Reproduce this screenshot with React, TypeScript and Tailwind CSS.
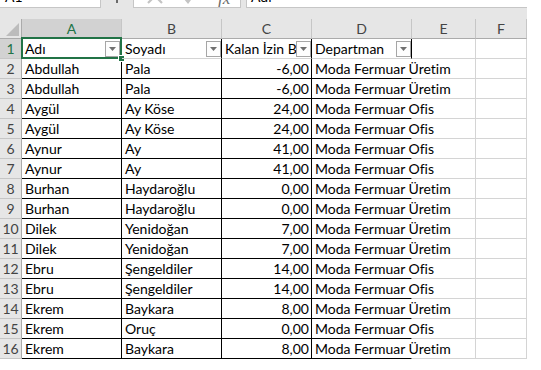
import React from 'react';

const GREEN = '#217346';

const data: [string, string, string, string][] = [
    ['Abdullah', 'Pala', '-6,00', 'Moda Fermuar Üretim'],
    ['Abdullah', 'Pala', '-6,00', 'Moda Fermuar Üretim'],
    ['Aygül', 'Ay Köse', '24,00', 'Moda Fermuar Ofis'],
    ['Aygül', 'Ay Köse', '24,00', 'Moda Fermuar Ofis'],
    ['Aynur', 'Ay', '41,00', 'Moda Fermuar Ofis'],
    ['Aynur', 'Ay', '41,00', 'Moda Fermuar Ofis'],
    ['Burhan', 'Haydaroğlu', '0,00', 'Moda Fermuar Üretim'],
    ['Burhan', 'Haydaroğlu', '0,00', 'Moda Fermuar Üretim'],
    ['Dilek', 'Yenidoğan', '7,00', 'Moda Fermuar Üretim'],
    ['Dilek', 'Yenidoğan', '7,00', 'Moda Fermuar Üretim'],
    ['Ebru', 'Şengeldiler', '14,00', 'Moda Fermuar Ofis'],
    ['Ebru', 'Şengeldiler', '14,00', 'Moda Fermuar Ofis'],
    ['Ekrem', 'Baykara', '8,00', 'Moda Fermuar Üretim'],
    ['Ekrem', 'Oruç', '0,00', 'Moda Fermuar Ofis'],
    ['Ekrem', 'Baykara', '8,00', 'Moda Fermuar Üretim'],
];

function FilterButton({ className = '' }: { className?: string }) {
    return (
        <div className={`mb-[1px] flex h-[16px] w-[15px] shrink-0 items-center justify-center border border-[#a6a6a6] bg-[#fdfdfd] ${className}`}>
            <svg width="7" height="4" viewBox="0 0 7 4">
                <path d="M0 0h7L3.5 4z" fill="#707070" />
            </svg>
        </div>
    );
}

function FormulaStrip() {
    return (
        <div className="flex h-[8px] w-[527px] overflow-hidden bg-[#e6e6e6] text-[14px] text-black">
            {/* name box */}
            <div className="h-full w-[101px] overflow-hidden border-r border-b border-[#c6c6c6] bg-white">
                <div className="-mt-[15px] flex h-[22px] items-center pl-[5px]">A1</div>
            </div>
            <div className="flex w-[32px] justify-center">
                <div className="h-[3px] w-[2px] bg-[#6a6a6a]" />
            </div>
            {/* cancel / enter / fx */}
            <div className="flex h-full w-[108px] overflow-hidden border-x border-b border-[#c6c6c6] bg-white">
                <svg className="-mt-[13px] ml-[12px]" width="18" height="18" viewBox="0 0 18 18">
                    <path d="M2 2L16 16M16 2L2 16" stroke="#c4c4c4" strokeWidth="2.2" />
                </svg>
                <svg className="-mt-[13px] ml-[18px]" width="16" height="18" viewBox="0 0 16 18">
                    <path d="M1 9L6 15L15 3" stroke="#c4c4c4" strokeWidth="2.4" fill="none" />
                </svg>
                <div className="-mt-[14px] ml-[20px] font-[family-name:Liberation_Serif,serif] text-[17px] italic text-[#6a6a6a]">fx</div>
            </div>
            <div className="w-[5px]" />
            <div className="h-full flex-1 overflow-hidden border-l border-b border-[#c6c6c6] bg-white">
                <div className="-mt-[15px] flex h-[22px] items-center pl-[4px]">Adı</div>
            </div>
        </div>
    );
}

export default function App() {
    const colLetters = ['A', 'B', 'C', 'D', 'E', 'F'];
    const headers = ['Adı', 'Soyadı', 'Kalan İzin Bakiye', 'Departman'];

    return (
        <div className="h-[370px] w-[541px] overflow-hidden bg-white font-[family-name:Lato,sans-serif] text-black [font-variant-ligatures:none]">
            <FormulaStrip />
            <div className="h-[11px] w-[527px] bg-[#e6e6e6]" />

            <div className="grid w-[527px] grid-cols-[22px_100px_100px_90px_100px_64px_51px] text-[14px] leading-[18px]">
                {/* column headers */}
                <div className="flex h-[20px] items-end justify-end border-r border-b border-[#ababab] bg-[#e6e6e6] pr-[2px] pb-[2px]">
                    <svg width="13" height="13" viewBox="0 0 13 13">
                        <path d="M13 0V13H0z" fill="#bcbcbc" />
                    </svg>
                </div>
                {colLetters.map((c) => (
                    <div
                        key={c}
                        className={`flex h-[20px] items-center justify-center border-r border-b ${c === 'A' ? 'border-r-[#c6c6c6] border-b-[#217346] bg-[#d2d2d2] text-[#217346]' : 'border-r-[#c6c6c6] border-b-[#ababab] bg-[#e6e6e6] text-[#444]'}`}
                    >
                        {c}
                    </div>
                ))}

                {/* row 1: table headers */}
                <div className="flex h-[20px] items-end justify-center border-r border-b border-r-[#ababab] border-b-[#c6c6c6] bg-[#d2d2d2] text-[#217346]">1</div>
                {headers.map((h, i) => (
                    <div key={h} className="relative flex h-[20px] items-end border-r border-b border-r-black border-b-[#d4d4d4]">
                        <span className="flex-1 overflow-hidden whitespace-nowrap pl-[3px]">{h}</span>
                        <FilterButton className={i === 0 ? 'mr-[1px]' : ''} />
                        {i === 0 && (
                            <>
                                <div className="pointer-events-none absolute -top-[2px] -right-[1px] -bottom-[1px] -left-[1px] border-2" style={{ borderColor: GREEN }} />
                                <div className="absolute -right-[4px] -bottom-[4px] h-[7px] w-[7px] border border-white bg-[#217346]" />
                            </>
                        )}
                    </div>
                ))}
                <div className="h-[20px] border-r border-b border-[#d4d4d4]" />
                <div className="h-[20px] border-r border-b border-[#d4d4d4]" />

                {/* data rows */}
                {data.map((r, idx) => (
                    <React.Fragment key={idx}>
                        <div className="flex h-[20px] items-end justify-center border-r border-b border-r-[#ababab] border-b-[#c6c6c6] bg-[#e6e6e6] text-[#444]">
                            {idx + 2}
                        </div>
                        <div className="flex h-[20px] items-end overflow-hidden whitespace-nowrap border-r border-b border-black pl-[3px]">{r[0]}</div>
                        <div className="flex h-[20px] items-end overflow-hidden whitespace-nowrap border-r border-b border-black pl-[3px]">{r[1]}</div>
                        <div className="flex h-[20px] items-end justify-end overflow-hidden whitespace-nowrap border-r border-b border-black pr-[2px]">{r[2]}</div>
                        <div className="flex h-[20px] items-end whitespace-nowrap border-r border-b border-r-transparent border-b-black pl-[3px]">{r[3]}</div>
                        <div className="h-[20px] border-r border-b border-[#d4d4d4]" />
                        <div className="h-[20px] border-r border-b border-[#d4d4d4]" />
                    </React.Fragment>
                ))}
            </div>
        </div>
    );
}
